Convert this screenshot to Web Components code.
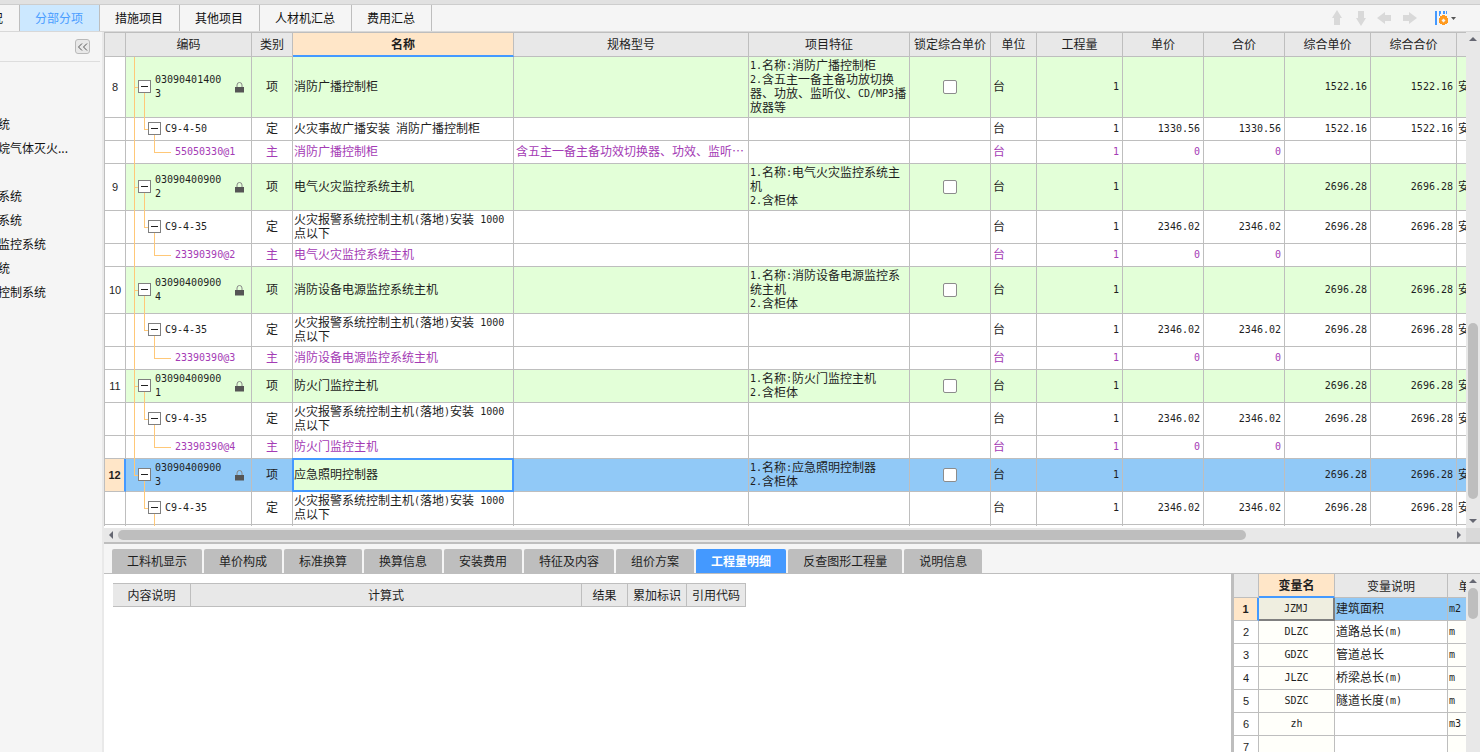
<!DOCTYPE html>
<html lang="zh-CN">
<head>
<meta charset="utf-8">
<title>分部分项</title>
<style>
html, body { margin: 0; height: 100%; }
body {
  font: 12px/14px "Noto Sans CJK SC", sans-serif;
  color: #1e1e1e;
  overflow: hidden;
  --line: #bebebe; --head: #e8e8e8; --panel: #f5f5f5; --blue: #4499ff;
  --pick: #91c9f7; --peach: #ffe6c8; --green: #e3ffd8; --purple: #a43bb5;
}
</style>
</head>
<body>
<budget-app></budget-app>
<script>
const define = (name, html, setup) => {
  const template = document.createElement('template');
  template.innerHTML = html;
  customElements.define(name, class extends HTMLElement {
    constructor() {
      super();
      this.attachShadow({ mode: 'open' }).append(template.content.cloneNode(true));
    }
    connectedCallback() {
      if (setup && !this.ready) { this.ready = true; setup(this, this.shadowRoot); }
    }
  });
};

// Latin runs are set half as wide as a Chinese character.
const mix = text => text.replace(/[\x20-\x7e]+/g, run => `<span class="l">${run}</span>`);

const tableCss = `
  table { border-collapse: separate; border-spacing: 0; table-layout: fixed; width: 0; }
  th, td { box-sizing: border-box; height: 23px; padding: 1px 1px 3px; border: solid var(--line); border-width: 0 1px 1px 0; font-weight: normal; overflow: hidden; }
  th { height: 24px; background: var(--head); text-align: center; white-space: nowrap; }
  td { background: #fff; overflow-wrap: anywhere; }
  .l { font-family: "DejaVu Sans Mono", monospace; font-size: 10px; line-height: 0; vertical-align: 1px; }
  .c { text-align: center; }
  .n { text-align: right; padding-right: 3px; }
  .i { padding: 2px 0; text-align: center; font-family: "Liberation Sans", sans-serif; font-size: 11px; }
  th.on { background: var(--peach); font-weight: bold; border-bottom: 2px solid var(--blue); padding-bottom: 2px; }
  tr.pick td { background: var(--pick); }
  tr.pick td.i { background: var(--peach); font-weight: bold; border-right: 2px solid var(--blue); }
`;

define('page-tab', `
<style>
:host { display: block; flex: none; }
button { font: inherit; color: #111; height: 100%; padding: 0 16px 0 15px; border: 0; border-right: 1px solid var(--line); background: none; white-space: nowrap; }
:host([first]) { width: 20px; overflow: hidden; display: flex; justify-content: flex-end; }
:host([on]) button { background: #cce8ff; color: #4a9dff; }
</style><button type="button"><slot></slot></button>`);

define('top-bar', `
<style>
:host { display: flex; border-top: 1px solid #cdcdcd; border-bottom: 1px solid #d8d8d8; box-shadow: 0 -4px #e1e1e1; margin-top: 4px; height: 26px; background: var(--panel); }
nav { display: flex; }
.tools { margin-left: auto; display: flex; align-items: center; gap: 6px; padding-right: 20px; }
button { display: flex; padding: 0; border: 0; background: none; }
button:last-child { margin-left: 10px; }
svg { display: block; }
</style>
<nav><slot></slot></nav>
<div class="tools">
<button type="button" aria-label="上移"><svg width="18" height="18" fill="#d9d9d9"><path d="M9 1l5 8h-2v7H6V9H4z"/></svg></button>
<button type="button" aria-label="下移"><svg width="18" height="18" fill="#d9d9d9"><path d="M9 17l5-8h-2V2H6v7H4z"/></svg></button>
<button type="button" aria-label="左移"><svg width="18" height="18" fill="#d9d9d9"><path d="M1 9l8-6v3h6v6H9v3z"/></svg></button>
<button type="button" aria-label="右移"><svg width="18" height="18" fill="#d9d9d9"><path d="M17 9l-8-6v3H3v6h6v3z"/></svg></button>
<button type="button" aria-label="列设置"><svg width="26" height="16"><path fill="#4499ff" d="M1 1h2v14H1zM5 1h2v3H5zM9 1h2v3H9zM12 1h1v3h-1zM5 4h1v2H5z"/><path fill="#ff9a1f" fill-rule="evenodd" d="M8 5h3v1h2v2h1v5h-1v1h-2v1H8v-1H6v-1H5V8h1V6h2zM9.500 8.500L7.500 10.500l2 2 2-2z"/><path fill="#555" d="M17 7h5l-2.500 3z"/></svg></button>
</div>`);

define('side-nav', `
<style>
:host { display: block; box-sizing: border-box; background: var(--panel); border-right: 2px solid #e9e9e9; overflow: hidden; }
header { display: flex; justify-content: flex-end; height: 22px; padding: 7px 10px 0 0; margin-right: 2px; border-bottom: 1px solid #ddd; }
button { width: 15px; height: 15px; padding: 0; border: 1px solid #b9b9b9; border-radius: 3px; background: #e8e8e8; display: grid; place-items: center; }
ul { list-style: none; margin: 50px 0 0 -2px; padding: 0; }
li { height: 24px; line-height: 24px; white-space: nowrap; }
a { color: #111; text-decoration: none; }
</style>
<header><button type="button" aria-label="收起"><svg width="12" height="10" fill="none" stroke="#555"><path d="M5 1.500L1.500 5 5 8.500M10 1.500L6.500 5 10 8.500"/></svg></button></header>
<ul></ul>`, (el, root) => {
  root.querySelector('ul').innerHTML = ['统', '烷气体灭火...', '', '系统', '系统', '监控系统', '统', '控制系统']
    .map(t => `<li>${t && `<a href="#">${t}</a>`}</li>`).join('');
});

define('scroll-strip', `
<style>
:host { display: flex; flex-direction: column; background: var(--head); width: 14px; }
:host([across]) { flex-direction: row; width: auto; height: 14px; }
.arrow { flex: none; width: 14px; height: 14px; display: grid; place-items: center; }
.thumb { margin: 0 2px; border-radius: 5px; background: var(--line); }
:host([across]) .thumb { margin: 2px 0; }
:host([across]) svg { transform: rotate(-90deg); }
:host([open]) .end { display: none; }
</style>
<div class="arrow"><svg width="8" height="4" fill="#666873"><path d="M0 4h8L4 0z"/></svg></div>
<div class="a"></div><div class="thumb"></div><div class="b"></div>
<div class="arrow end"><svg width="8" height="4" fill="#666873"><path d="M0 0h8L4 4z"/></svg></div>`, (el, root) => {
  const parts = el.getAttribute('parts').split(' ');
  ['.a', '.thumb', '.b'].forEach((s, i) => root.querySelector(s).style.flex = `${parts[i]} 1 0`);
});

define('tree-cell', `
<style>
:host { display: flex; align-items: center; padding-left: calc(11px + var(--level) * 10px); }
.wires { position: absolute; inset: 0 0 -1px 0; pointer-events: none; background-repeat: no-repeat; }
button { position: relative; flex: none; width: 13px; height: 13px; padding: 0; margin-right: 4px; border: 1px solid #7f7f7f; background: #fff; display: grid; place-items: center; }
button::before { content: ""; width: 7px; height: 1px; background: #222; }
.text { flex: 0 1 69px; }
svg { display: none; margin: 2px 6px 0 auto; }
:host([level="0"]) svg { display: block; }
:host([level="2"]) button { display: none; }
:host([level="2"]) { padding-left: 48px; }
</style>
<span class="wires"></span><button type="button" aria-label="折叠"></button><span class="text"><slot></slot></span>
<svg width="9" height="11"><path d="M2 5V3a2.500 2.500 0 015 0v2" fill="none" stroke="#888"/><path d="M0 5h9v5.500H0z" fill="#555"/></svg>`, (el, root) => {
  const level = +el.getAttribute('level'), x = 8 + level * 10, layers = [];
  const wire = (left, top, width, height) => layers.push([`${left}px ${top}`, `${width} ${height}`]);
  const trunk = el.getAttribute('trunk');
  if (trunk !== 'none') wire(8, 'top', '1px', trunk === 'half' ? '50%' : '100%');
  if (level) wire(x, 'top', '1px', '50%');
  wire(x, '50%', level === 2 ? '17px' : '4px', '1px');
  if (level < 2) wire(x + 10, 'bottom', '1px', '50%');
  const s = root.querySelector('.wires').style;
  el.style.setProperty('--level', level);
  s.backgroundImage = layers.map(() => 'linear-gradient(#ffc878, #ffc878)').join();
  s.backgroundPosition = layers.map(l => l[0]).join();
  s.backgroundSize = layers.map(l => l[1]).join();
});

define('cost-grid', `
<style>${tableCss}
:host { display: block; overflow: hidden; border: solid var(--line); border-width: 1px 0 0 1px; background: #fff; }
.t { position: relative; overflow: visible; }
tr.item td { background: var(--green); }
tr.item td.i { background: #fff; }
tr.main { color: var(--purple); }
tr.item.pick td { background: var(--pick); }
tr.item.pick td.i { background: var(--peach); }
tr.item.pick td.name { position: relative; overflow: visible; background: var(--green); }
.pick .name::after { content: ""; position: absolute; inset: -1px; border: 2px solid var(--blue); }
tr.main .spec { white-space: nowrap; }
.spec, .unit { padding-left: 2px; }
input { appearance: none; display: block; margin: 2px auto 0; width: 14px; height: 14px; border: 1px solid #8c8c8c; border-radius: 2px; background: #fff; }
</style>
<table><colgroup></colgroup><thead></thead><tbody></tbody></table>`, (el, root) => {
  const heads = [['', 21], ['编码', 126], ['类别', 41], ['名称', 221], ['规格型号', 235], ['项目特征', 161], ['锁定综合单价', 81], ['单位', 46], ['工程量', 86], ['单价', 81], ['合价', 81], ['综合单价', 86], ['综合合价', 86], ['', 81]];
  const panel = '火灾报警系统控制主机(落地)安装 1000点以下';
  const rows = [
    ['8', '030904014003', '消防广播控制柜', '', '1.名称:消防广播控制柜<br>2.含五主一备主备功放切换器、功放、监听仪、CD/MP3播放器等', '1522.16'],
    ['', 'C9-4-50', '火灾事故广播安装 消防广播控制柜', '', '', '1522.16', '1330.56'],
    ['', '55050330@1', '消防广播控制柜', '含五主一备主备功效切换器、功效、监听…'],
    ['9', '030904009002', '电气火灾监控系统主机', '', '1.名称:电气火灾监控系统主机<br>2.含柜体', '2696.28'],
    ['', 'C9-4-35', panel, '', '', '2696.28', '2346.02'],
    ['', '23390390@2', '电气火灾监控系统主机', ''],
    ['10', '030904009004', '消防设备电源监控系统主机', '', '1.名称:消防设备电源监控系统主机<br>2.含柜体', '2696.28'],
    ['', 'C9-4-35', panel, '', '', '2696.28', '2346.02'],
    ['', '23390390@3', '消防设备电源监控系统主机', ''],
    ['11', '030904009001', '防火门监控主机', '', '1.名称:防火门监控主机<br>2.含柜体', '2696.28'],
    ['', 'C9-4-35', panel, '', '', '2696.28', '2346.02'],
    ['', '23390390@4', '防火门监控主机', ''],
    ['12', '030904009003', '应急照明控制器', '', '1.名称:应急照明控制器<br>2.含柜体', '2696.28'],
    ['', 'C9-4-35', panel, '', '', '2696.28', '2346.02'],
  ];
  const text = t => (t || '').split('<br>').map(mix).join('<br>');
  root.querySelector('colgroup').innerHTML = heads.map(h => `<col style="width:${h[1]}px">`).join('');
  root.querySelector('thead').innerHTML = '<tr>' + heads.map(h => `<th${h[0] === '名称' ? ' class="on"' : ''}>${h[0]}</th>`).join('') + '</tr>';
  root.querySelector('tbody').innerHTML = rows.map((r, i) => {
    const level = i % 3, total = r[5], price = level === 2 ? '0' : r[6];
    const trunk = i < 12 ? 'full' : i === 12 ? 'half' : 'none';
    return `<tr class="${['item', 'norm', 'main'][level]}${i === 12 ? ' pick' : ''}">
      <td class="i">${r[0]}</td>
      <td class="t"><tree-cell level="${level}" trunk="${trunk}">${mix(r[1])}</tree-cell></td>
      <td class="c">${'项定主'[level]}</td><td class="name">${text(r[2])}</td><td class="spec">${text(r[3])}</td><td>${text(r[4])}</td>
      <td>${level ? '' : '<input type="checkbox" aria-label="锁定综合单价">'}</td><td class="unit">台</td><td class="n">${mix('1')}</td>
      <td class="n">${text(price)}</td><td class="n">${text(price)}</td><td class="n">${text(total)}</td><td class="n">${text(total)}</td>
      <td>${total ? '安' : ''}</td></tr>`;
  }).join('') + '<tr class="main"><td></td><td class="t"><tree-cell level="2" trunk="none"></tree-cell></td>' + '<td></td>'.repeat(12) + '</tr>';
});

define('dock-tab', `
<style>
:host { display: block; }
button { font: inherit; color: #1e1e1e; height: 24px; padding: 0 15px; border: 0; border-radius: 2px 2px 0 0; background: var(--line); white-space: nowrap; }
:host([on]) button { background: var(--blue); color: #fff; font-weight: bold; }
</style><button type="button"><slot></slot></button>`);

define('formula-table', `
<style>${tableCss}
:host { display: block; overflow: hidden; background: #fff; padding: 9px 0 0 9px; }
th { border-top-width: 1px; padding-bottom: 1px; }
</style>
<table><colgroup><col style="width:78px"><col style="width:391px"><col style="width:46px"><col style="width:59px"><col style="width:59px"></colgroup>
<thead><tr><th>内容说明</th><th>计算式</th><th>结果</th><th>累加标识</th><th>引用代码</th></tr></thead></table>`);

define('variable-table', `
<style>${tableCss}
:host { display: block; overflow: hidden; background: #fff; border-left: 3px solid var(--line); }
th { padding-bottom: 1px; }
td:nth-child(2), td:nth-child(4) { background: #fffffa; }
tr.pick td:nth-child(2) { background: #efeee0; border-right: 2px solid #808080; border-bottom: 2px solid #808080; padding-bottom: 2px; }
</style>
<table><colgroup><col style="width:25px"><col style="width:76px"><col style="width:113px"><col style="width:46px"></colgroup>
<thead><tr><th></th><th class="on">变量名</th><th>变量说明</th><th>单位</th></tr></thead><tbody></tbody></table>`, (el, root) => {
  root.querySelector('tbody').innerHTML = [['JZMJ', '建筑面积', 'm2'], ['DLZC', '道路总长(m)', 'm'], ['GDZC', '管道总长', 'm'], ['JLZC', '桥梁总长(m)', 'm'], ['SDZC', '隧道长度(m)', 'm'], ['zh', '', 'm3'], ['', '', '']]
    .map((r, i) => `<tr${i ? '' : ' class="pick"'}><td class="i">${i + 1}</td><td class="c">${mix(r[0])}</td><td>${mix(r[1])}</td><td>${mix(r[2])}</td></tr>`).join('');
});

define('detail-dock', `
<style>
:host { display: flex; flex-direction: column; border-top: 2px solid var(--line); background: var(--panel); overflow: hidden; }
nav { display: flex; gap: 2px; padding: 5px 8px 0; border-bottom: 1px solid var(--line); }
.body { flex: 1; min-height: 0; display: grid; grid-template-columns: minmax(0, 1fr) 235px 14px; }
</style>
<nav><slot></slot></nav>
<div class="body"><formula-table></formula-table><variable-table></variable-table><scroll-strip open parts="0 31 133"></scroll-strip></div>`);

define('budget-app', `
<style>
:host { display: grid; height: 100vh; grid-template: auto minmax(0, 1fr) / 104px minmax(0, 1fr); background: var(--panel); }
top-bar { grid-column: 1 / -1; }
main { display: grid; grid-template: minmax(0, 1fr) 2px 14px 210px / minmax(0, 1fr) 14px; min-height: 0; }
.gap { background: #fff; }
.tall { grid-area: 1 / 2 / 3 / 3; }
.corner { background: #d9d9d9; }
detail-dock { grid-column: 1 / -1; }
</style>
<top-bar><page-tab first>况</page-tab><page-tab on>分部分项</page-tab><page-tab>措施项目</page-tab><page-tab>其他项目</page-tab><page-tab>人材机汇总</page-tab><page-tab>费用汇总</page-tab></top-bar>
<side-nav></side-nav>
<main>
<cost-grid></cost-grid><scroll-strip class="tall" parts="279 177 15"></scroll-strip>
<div class="gap"></div>
<scroll-strip across parts="0 1128 206"></scroll-strip><div class="corner"></div>
<detail-dock><dock-tab>工料机显示</dock-tab><dock-tab>单价构成</dock-tab><dock-tab>标准换算</dock-tab><dock-tab>换算信息</dock-tab><dock-tab>安装费用</dock-tab><dock-tab>特征及内容</dock-tab><dock-tab>组价方案</dock-tab><dock-tab on>工程量明细</dock-tab><dock-tab>反查图形工程量</dock-tab><dock-tab>说明信息</dock-tab></detail-dock>
</main>`);
</script>
</body>
</html>
